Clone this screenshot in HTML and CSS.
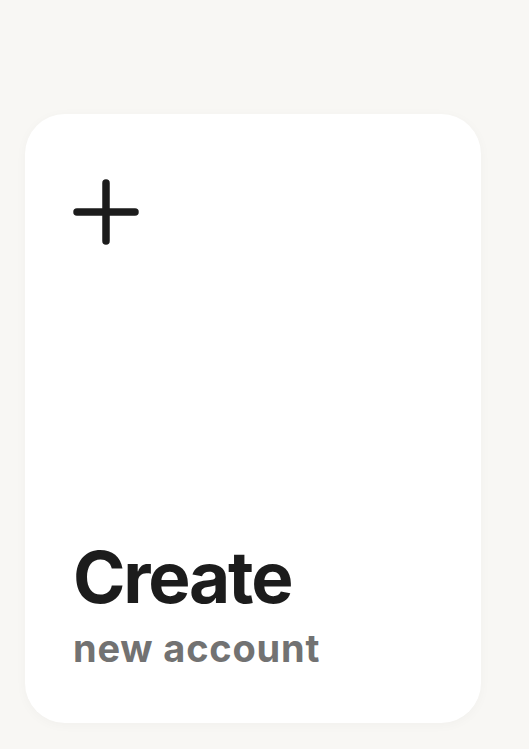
FILE: index.html
```html
<!DOCTYPE html>
<html lang="en">
<head>
  <meta charset="UTF-8" />
  <meta name="viewport" content="width=device-width, initial-scale=1.0"/>
  <title>Create new account</title>
  <link rel="stylesheet" href="styles.css">
</head>
<body>

  <div class="page">
    <a class="card" href="#">
      <svg class="plus" viewBox="0 0 66 66" width="66" height="66">
        <path d="M33 4 V62 M4 33 H62" stroke="#1c1c1c" stroke-width="7.5" stroke-linecap="round" fill="none"/>
      </svg>

      <div class="label">
        <h2 class="title">Create</h2>
        <p class="sub">new account</p>
      </div>
    </a>
  </div>

</body>
</html>
```

FILE: styles.css
```css
body {
  font-family: 'Inter', sans-serif;
  background-color: #f8f7f4;
  margin: 0;
  padding: 0;
}

.page {
  padding: 114px 48px 26px 25px;
}

.card {
  display: flex;
  flex-direction: column;
  justify-content: space-between;
  height: 609px;
  box-sizing: border-box;
  padding: 65px 48px 51px 48px;
  background: white;
  border-radius: 40px;
  text-decoration: none;
  box-shadow: 0 2px 12px rgba(0,0,0,0.03);
}

.plus {
  display: block;
}

.title {
  margin: 0;
  font-size: 71px;
  font-weight: 700;
  line-height: 1.2;
  letter-spacing: -2.2px;
  color: #1c1c1c;
}

.sub {
  margin: 4px 0 0;
  font-size: 38px;
  font-weight: 700;
  line-height: 1.25;
  letter-spacing: 0.8px;
  color: #727272;
}
```
